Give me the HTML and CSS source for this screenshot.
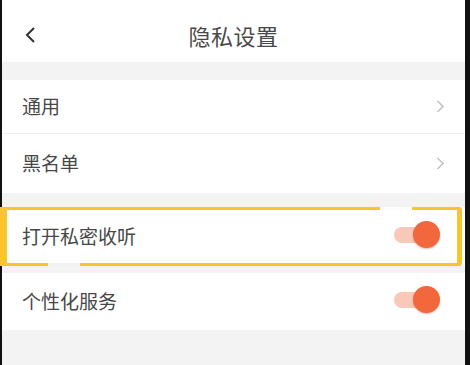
FILE: index.html
```html
<html>
  <head>
    <link rel="stylesheet" href="styles.css">
  </head>
  <body>
    <div class="screen">
      <header class="nav">
        <span class="nav-back">
          <svg width="12" height="16" viewBox="0 0 12 16"><path d="M10 1 L3 8 L10 15" fill="none" stroke="#333" stroke-width="2"/></svg>
        </span>
        <h1 class="nav-title">隐私设置</h1>
      </header>

      <div class="gap gap-top"></div>

      <ul class="group">
        <li class="row row-first">
          <span class="row-label">通用</span>
          <svg class="chevron" width="9" height="13" viewBox="0 0 9 13"><path d="M1.5 1 L7 6.5 L1.5 12" fill="none" stroke="#c4c4c4" stroke-width="1.6"/></svg>
        </li>
        <li class="row row-second">
          <span class="row-label">黑名单</span>
          <svg class="chevron" width="9" height="13" viewBox="0 0 9 13"><path d="M1.5 1 L7 6.5 L1.5 12" fill="none" stroke="#c4c4c4" stroke-width="1.6"/></svg>
        </li>
      </ul>

      <div class="gap gap-mid"></div>

      <ul class="group">
        <li class="row row-marked">
          <span class="row-label">打开私密收听</span>
          <span class="switch"><span class="switch-track"></span><span class="switch-knob"></span></span>
          <div class="marker">
            <span class="marker-gap marker-gap-top"></span>
            <span class="marker-gap marker-gap-bottom"></span>
          </div>
        </li>
      </ul>

      <div class="gap gap-small"></div>

      <ul class="group">
        <li class="row row-last">
          <span class="row-label">个性化服务</span>
          <span class="switch"><span class="switch-track"></span><span class="switch-knob"></span></span>
        </li>
      </ul>

      <div class="gap gap-bottom"></div>
    </div>
  </body>
</html>
```

FILE: styles.css
```css
html,
body,
ul,
h1 {
  margin: 0;
  padding: 0;
}
html {
  background: #111;
}
body {
  font-family: "Noto Sans CJK SC", "Noto Sans", sans-serif;
  color: #474747;
}
ul {
  list-style-type: none;
}
.screen {
  margin-left: 2px;
  width: 463px;
  height: 365px;
  background: #f3f3f4;
}
.nav {
  display: flex;
  align-items: center;
  justify-content: center;
  position: relative;
  height: 62px;
  background: #fff;
}
.nav-back {
  position: absolute;
  left: 22px;
  top: 27px;
  display: flex;
}
.nav-title {
  font-size: 22px;
  font-weight: normal;
  color: #484848;
  letter-spacing: 0.5px;
  padding-top: 8px;
}
.gap-top {
  height: 18px;
}
.gap-mid {
  height: 14px;
}
.gap-small {
  height: 7px;
}
.group {
  background: #fff;
}
.row {
  display: flex;
  align-items: center;
  justify-content: space-between;
  padding: 0 20px 0 20px;
  font-size: 19px;
}
.row-first {
  height: 53px;
  border-bottom: 1px solid #efefef;
}
.row-second {
  height: 59px;
}
.row-marked {
  position: relative;
  height: 59px;
  padding-right: 25px;
}
.row-last {
  height: 57px;
  padding-right: 25px;
}
.row-label {
  padding-bottom: 3px;
}
.chevron {
  display: block;
}
.switch {
  position: relative;
  display: flex;
  align-items: center;
  width: 46px;
  height: 27px;
  margin-top: -4px;
}
.switch-track {
  width: 40px;
  height: 16px;
  border-radius: 8px;
  background: #f9c8b9;
}
.switch-knob {
  position: absolute;
  right: 0;
  top: 0;
  width: 27px;
  height: 27px;
  border-radius: 50%;
  background: #f2673c;
  box-shadow: 0 1px 2px rgba(160, 60, 30, 0.35);
}
.marker {
  position: absolute;
  top: 0;
  bottom: 0;
  left: -2px;
  right: 3px;
  border-style: solid;
  border-color: #f8c52a;
  border-width: 3px 5px 3px 7px;
  border-radius: 0 3px 3px 0;
}
.marker-gap {
  position: absolute;
  width: 32px;
  height: 3px;
}
.marker-gap-top {
  top: -3px;
  left: 373px;
  background: #fcfcfc;
}
.marker-gap-bottom {
  bottom: -3px;
  left: 41px;
  background: #f1f1f1;
}
```
